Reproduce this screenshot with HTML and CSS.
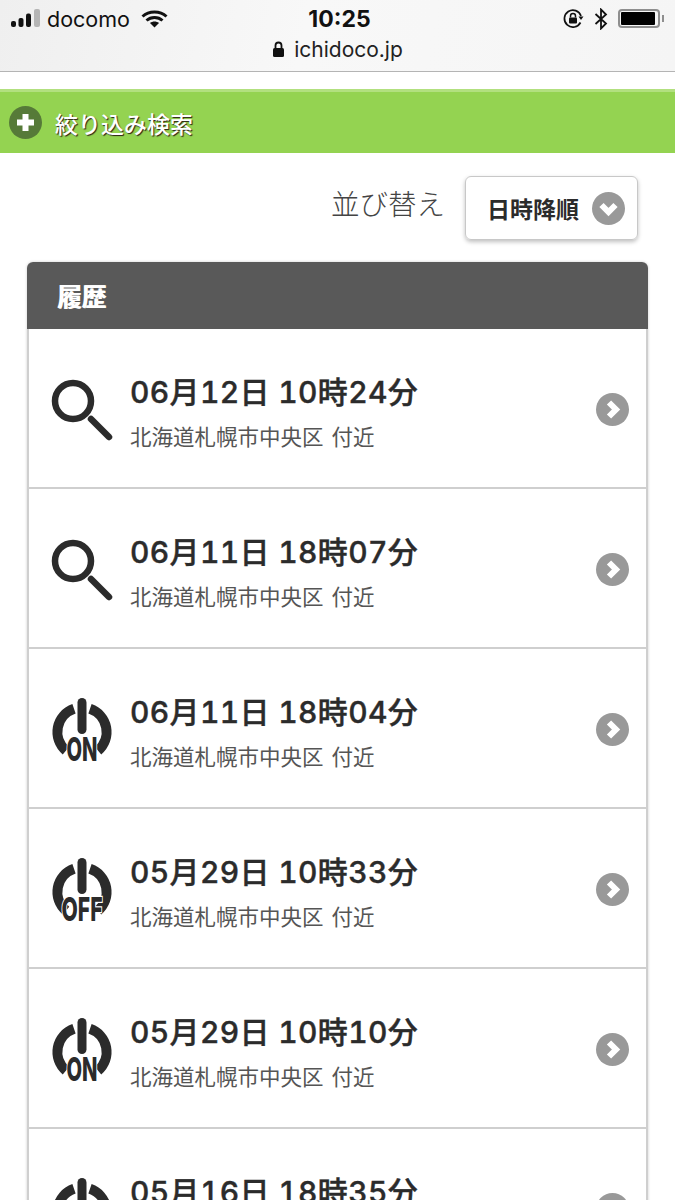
FILE: index.html
```html
<!DOCTYPE html>
<html lang="ja">
	<head>
		<meta charset="UTF-8" />
		<meta name="viewport" content="width=device-width, initial-scale=1.0" />
		<title>履歴</title>
		<link rel="stylesheet" href="styles.css">
	</head>
	<body>
		<svg class="defs" width="0" height="0">
			<defs>
				<g id="search">
					<circle cx="21" cy="21" r="18" fill="none" stroke="#2b2b2b" stroke-width="6.5" />
					<path d="M39 39 L57 57" stroke="#2b2b2b" stroke-width="6.5" stroke-linecap="round" />
				</g>
				<g id="power">
					<path d="M22 11.800 A24.500 24.500 0 0 0 14 53.600 M38 11.800 A24.500 24.500 0 0 1 46 53.600" fill="none" stroke="#2b2b2b" stroke-width="10" />
					<rect x="25.500" y="1" width="9" height="36" rx="4.500" fill="#2b2b2b" />
				</g>
				<g id="next">
					<circle cx="16.500" cy="16.500" r="16.500" fill="#999" />
					<path d="M13 9.500 L20 16.500 L13 23.500" fill="none" stroke="#fff" stroke-width="6" />
				</g>
			</defs>
		</svg>

		<header class="browser">
			<div class="status">
				<div class="carrier">
					<svg class="signal" width="30" height="19" viewBox="0 0 30 19">
						<rect x="0" y="12" width="5" height="6" rx="2" fill="#111" />
						<rect x="7.500" y="9" width="5" height="9" rx="2" fill="#111" />
						<rect x="15" y="4.500" width="5" height="13.500" rx="2" fill="#111" />
						<rect x="23" y="0" width="6" height="18" rx="2" fill="#b5b5b5" />
					</svg>
					<span>docomo</span>
					<svg class="wifi" width="27" height="18" viewBox="0 0 27 18">
						<path d="M1.500 6.500 C8 0.500 19 0.500 25.500 6.500 M5.500 10.500 C10 6.500 17 6.500 21.500 10.500" fill="none" stroke="#111" stroke-width="3" />
						<path d="M9 13 C11.500 11 15.500 11 18 13 L13.500 17.500 Z" fill="#111" />
					</svg>
				</div>
				<div class="time">10:25</div>
				<div class="sys">
					<svg width="22" height="22" viewBox="0 0 22 22">
						<path d="M18.500 14.500 A8.500 8.500 0 1 1 19 8" fill="none" stroke="#111" stroke-width="1.700" />
						<path d="M16.500 8.500 L21.500 8.500 L19 12 Z" fill="#111" />
						<rect x="7" y="9.500" width="8" height="6" rx="1" fill="#111" />
						<path d="M8.500 9.500 V8 A2.500 2.500 0 0 1 13.500 8 V9.500" fill="none" stroke="#111" stroke-width="1.500" />
					</svg>
					<svg width="14" height="22" viewBox="0 0 14 22">
						<path d="M1.500 6 L12 15.500 L7 20.500 V1.500 L12 6.500 L1.500 16" fill="none" stroke="#111" stroke-width="1.800" />
					</svg>
					<div class="battery"><div class="level"></div></div>
					<div class="tip"></div>
				</div>
			</div>
			<div class="url">
				<svg width="13" height="17" viewBox="0 0 13 17">
					<rect x="1" y="7" width="11" height="9" rx="1.500" fill="#111" />
					<path d="M3.500 7 V4.500 A3 3 0 0 1 9.500 4.500 V7" fill="none" stroke="#111" stroke-width="1.800" />
				</svg>
				<span>ichidoco.jp</span>
			</div>
		</header>

		<div class="filter">
			<svg width="33" height="33" viewBox="0 0 33 33">
				<circle cx="16.500" cy="16.500" r="16.500" fill="#567a38" />
				<path d="M16.500 8 V25 M8 16.500 H25" stroke="#fff" stroke-width="6" />
			</svg>
			<span>絞り込み検索</span>
		</div>

		<div class="sort">
			<span class="sort-label">並び替え</span>
			<div class="sort-button">
				<span>日時降順</span>
				<svg width="33" height="33" viewBox="0 0 33 33">
					<circle cx="16.500" cy="16.500" r="16.500" fill="#999" />
					<path d="M9.500 13 L16.500 20 L23.500 13" fill="none" stroke="#fff" stroke-width="6" />
				</svg>
			</div>
		</div>

		<section class="history">
			<h2>履歴</h2>
			<div class="row">
				<svg class="icon search" width="60" height="60" viewBox="0 0 60 60"><use href="#search" /></svg>
				<div class="info">
					<div class="when">06月12日 10時24分</div>
					<div class="where">北海道札幌市中央区 付近</div>
				</div>
				<svg class="go" width="33" height="33" viewBox="0 0 33 33"><use href="#next" /></svg>
			</div>
			<div class="row">
				<svg class="icon search" width="60" height="60" viewBox="0 0 60 60"><use href="#search" /></svg>
				<div class="info">
					<div class="when">06月11日 18時07分</div>
					<div class="where">北海道札幌市中央区 付近</div>
				</div>
				<svg class="go" width="33" height="33" viewBox="0 0 33 33"><use href="#next" /></svg>
			</div>
			<div class="row">
				<svg class="icon power" width="60" height="76" viewBox="0 0 60 76"><use href="#power" /><text class="onoff" x="30" y="64" textLength="31" lengthAdjust="spacingAndGlyphs">ON</text></svg>
				<div class="info">
					<div class="when">06月11日 18時04分</div>
					<div class="where">北海道札幌市中央区 付近</div>
				</div>
				<svg class="go" width="33" height="33" viewBox="0 0 33 33"><use href="#next" /></svg>
			</div>
			<div class="row">
				<svg class="icon power" width="60" height="76" viewBox="0 0 60 76"><use href="#power" /><text class="onoff" x="30" y="64" textLength="41" lengthAdjust="spacingAndGlyphs">OFF</text></svg>
				<div class="info">
					<div class="when">05月29日 10時33分</div>
					<div class="where">北海道札幌市中央区 付近</div>
				</div>
				<svg class="go" width="33" height="33" viewBox="0 0 33 33"><use href="#next" /></svg>
			</div>
			<div class="row">
				<svg class="icon power" width="60" height="76" viewBox="0 0 60 76"><use href="#power" /><text class="onoff" x="30" y="64" textLength="31" lengthAdjust="spacingAndGlyphs">ON</text></svg>
				<div class="info">
					<div class="when">05月29日 10時10分</div>
					<div class="where">北海道札幌市中央区 付近</div>
				</div>
				<svg class="go" width="33" height="33" viewBox="0 0 33 33"><use href="#next" /></svg>
			</div>
			<div class="row">
				<svg class="icon power" width="60" height="76" viewBox="0 0 60 76"><use href="#power" /><text class="onoff" x="30" y="64" textLength="31" lengthAdjust="spacingAndGlyphs">ON</text></svg>
				<div class="info">
					<div class="when">05月16日 18時35分</div>
					<div class="where">北海道札幌市中央区 付近</div>
				</div>
				<svg class="go" width="33" height="33" viewBox="0 0 33 33"><use href="#next" /></svg>
			</div>
		</section>
	</body>
</html>
```

FILE: styles.css
```css
html, body {
	height: 1200px;
	overflow: hidden;
}
body {
	margin: 0;
	background: #fff;
	font-family: Inter, "Noto Sans CJK JP", sans-serif;
	color: #2b2b2b;
}
.defs {
	display: block;
	height: 0;
}

.browser {
	height: 71px;
	background: linear-gradient(100deg, #efefef, #f8f8f8 45%, #f5f5f5);
	border-bottom: 1px solid #b4b4b4;
}
.status {
	height: 37px;
	padding: 0 11px;
	display: grid;
	grid-template-columns: 1fr auto 1fr;
	align-items: center;
	color: #111;
}
.carrier {
	display: flex;
	align-items: center;
	font-size: 21.500px;
	gap: 6px;
}
.carrier .wifi {
	margin-left: 5px;
}
.time {
	font-size: 23px;
	font-weight: 700;
	margin-left: 4px;
}
.sys {
	display: flex;
	justify-content: flex-end;
	align-items: center;
	gap: 10px;
}
.battery {
	width: 42px;
	height: 19px;
	box-sizing: border-box;
	border: 2px solid #8e8e8e;
	border-radius: 4px;
	padding: 1px 3px 1px 1px;
}
.level {
	height: 100%;
	background: #000;
	border-radius: 1px;
}
.tip {
	width: 2px;
	height: 7px;
	background: #8e8e8e;
	margin-left: -8px;
}
.url {
	display: flex;
	justify-content: center;
	align-items: center;
	gap: 9px;
	font-size: 21px;
	color: #222;
}

.filter {
	margin-top: 17px;
	height: 61px;
	background: #94d351;
	border-top: 3px solid #b2e07f;
	display: flex;
	align-items: center;
	gap: 13px;
	padding-left: 9px;
	font-size: 23px;
	font-weight: 500;
	color: #fff;
	text-shadow: 1px 1px 1px #2a2015;
}

.sort {
	display: flex;
	justify-content: flex-end;
	align-items: center;
	gap: 20px;
	padding: 23px 37px 22px 0;
}
.sort-label {
	font-size: 28.500px;
	font-weight: 300;
	color: #444;
	margin-top: -12px;
}
.sort-button {
	width: 173px;
	height: 64px;
	box-sizing: border-box;
	border: 1px solid #c8c8c8;
	border-radius: 6px;
	box-shadow: 0 2px 4px rgba(0, 0, 0, 0.25);
	display: flex;
	align-items: center;
	gap: 13px;
	padding-left: 21px;
	font-size: 23px;
	font-weight: 700;
}

.history {
	margin: 0 27px;
	box-shadow: 0 0 3px rgba(0, 0, 0, 0.2);
	border-radius: 6px 6px 0 0;
}
.history h2 {
	margin: 0;
	height: 67px;
	box-sizing: border-box;
	padding-left: 30px;
	display: flex;
	align-items: center;
	background: #595959;
	border-radius: 6px 6px 0 0;
	color: #fff;
	font-size: 24.500px;
	font-weight: 700;
	text-shadow: 1px 0 0 #fff;
}
.row {
	height: 160px;
	box-sizing: border-box;
	border: 2px solid #cfcfcf;
	border-top: 0;
	display: flex;
	align-items: center;
	padding: 0 17px 0 23px;
	gap: 18px;
}
.icon {
	flex: none;
	overflow: visible;
}
.icon.search {
	margin-top: 4px;
}
.icon.power {
	margin-top: 14px;
}
.onoff {
	font-family: Inter, sans-serif;
	font-size: 33px;
	font-weight: 800;
	text-anchor: middle;
	fill: #2b2b2b;
	stroke: #fff;
	stroke-width: 2.500px;
	paint-order: stroke;
}
.info {
	flex: 1;
	margin-top: 7px;
}
.when {
	font-size: 30px;
	font-weight: 500;
	line-height: 38px;
	letter-spacing: 0.350px;
	font-variant-numeric: tabular-nums;
	-webkit-text-stroke: 0.400px #2b2b2b;
}
.where {
	margin-top: 12px;
	font-size: 21.500px;
	line-height: 28px;
	word-spacing: 2px;
	color: #555;
}
.go {
	flex: none;
	margin-top: 2px;
}
```
